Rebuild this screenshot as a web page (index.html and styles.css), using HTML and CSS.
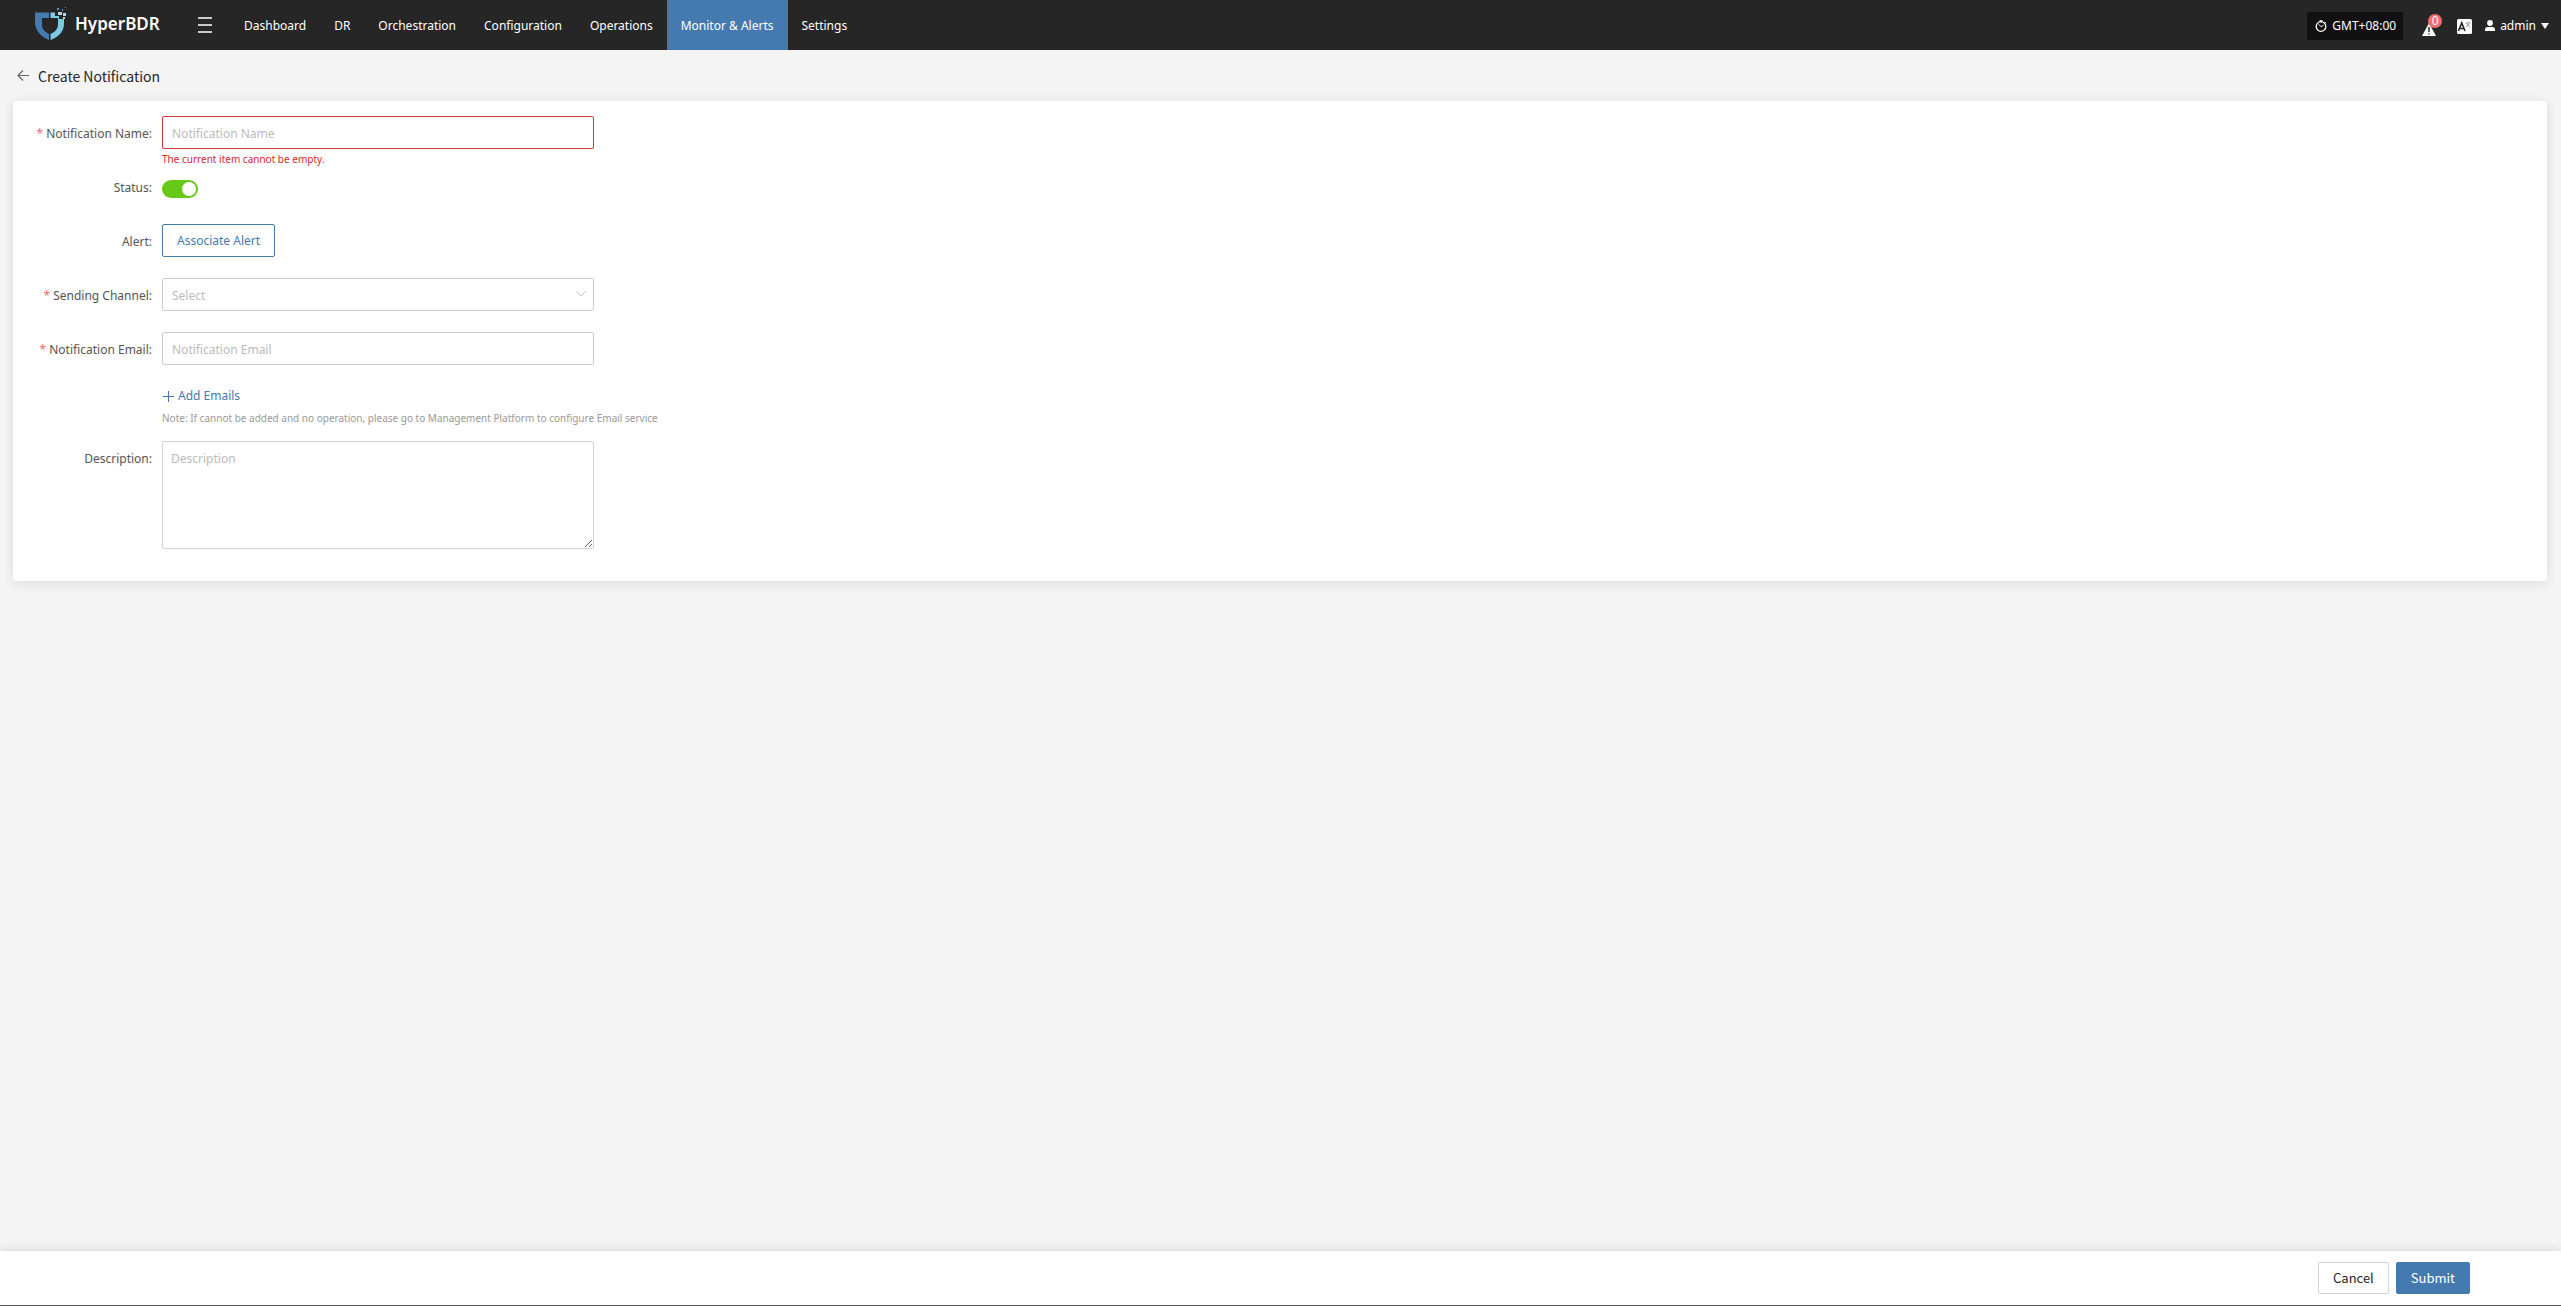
FILE: index.html
```html
<!DOCTYPE html>
<html lang="en">

<head>
	<meta charset="UTF-8">
	<meta name="viewport" content="width=device-width, initial-scale=1.0">
	<title>HyperBDR - Create Notification</title>
	<link rel="stylesheet" href="styles.css">
</head>

<body>
	<header class="topbar">
		<a class="logo" href="#">
			<svg width="32" height="34" viewBox="0 0 32 34" aria-hidden="true">
				<path fill="#457ab0" d="M0 5.5H14V11H7V18C7 22 10 25 14 27V33C5 29 0 23 0 15Z" />
				<path fill="#7dcae0" d="M15.5 5.5H20V9H24V12H29V17C29 24 24 30 15.5 33V27C20 25 23 22 23 17V11H15.5Z" />
				<path fill="#b9cfe8" d="M23 5H27V8H23ZM28 6H31V9H28ZM28 10H30V12H28Z" />
				<path fill="#5f8fc8" d="M22 1H24V3H22ZM27 2H28V4H27ZM30 0H31V1H30Z" />
			</svg>
			<span>HyperBDR</span>
		</a>
		<button class="menu-toggle" type="button" aria-label="Menu">
			<svg width="14" height="16" viewBox="0 0 14 16" aria-hidden="true">
				<path stroke="#fff" stroke-width="1.5" d="M0 1H14M0 8H14M0 15H14" />
			</svg>
		</button>
		<nav class="nav">
			<a href="#">Dashboard</a>
			<a href="#">DR</a>
			<a href="#">Orchestration</a>
			<a href="#">Configuration</a>
			<a href="#">Operations</a>
			<a class="active" href="#">Monitor &amp; Alerts</a>
			<a href="#">Settings</a>
		</nav>
		<div class="tools">
			<button class="timezone" type="button">
				<svg width="12" height="12" viewBox="0 0 12 12" fill="none" stroke="#fff" aria-hidden="true">
					<circle cx="6" cy="6.5" r="4.8" stroke-width="1.3" />
					<path d="M4.5 .7H7.5M6 1V2.5M3.8 4.3L6.2 6.8L8.5 5.2M9.8 2L11 3.2" />
				</svg>
				GMT+08:00
			</button>
			<button class="alarm" type="button" aria-label="Alerts">
				<svg width="14" height="13" viewBox="0 0 14 13" aria-hidden="true">
					<path fill="#fff" d="M7 0L14 13H0Z" />
					<path stroke="#262626" stroke-width="1.4" d="M7 4V9M7 10.2V11.6" />
				</svg>
				<span class="badge">0</span>
			</button>
			<button class="lang" type="button" aria-label="Language">
				<svg width="15" height="15" viewBox="0 0 15 15" fill="none" aria-hidden="true">
					<rect width="15" height="15" rx="1.5" fill="#fff" />
					<path stroke="#262626" stroke-width="1.6" d="M1.5 12L4.7 4L8 12M2.7 9.5H6.8" />
					<path stroke="#888" stroke-width=".8" d="M8.5 4H13.5M11 2.8V4M9.3 4.5L13.2 8M12.8 4.5L9 8" />
				</svg>
			</button>
			<button class="user" type="button">
				<svg width="10" height="12" viewBox="0 0 10 12" fill="#fff" aria-hidden="true">
					<circle cx="5" cy="3" r="2.9" />
					<path d="M0 11V9.5C0 7.7 1.5 7 3 7H7C8.5 7 10 7.7 10 9.5V11Z" />
				</svg>
				admin
				<svg width="8" height="6" viewBox="0 0 8 6" fill="#fff" aria-hidden="true">
					<path d="M0 0H8L4 6Z" />
				</svg>
			</button>
		</div>
	</header>

	<main class="page">
		<div class="page-title">
			<a href="#" aria-label="Back">
				<svg width="12" height="11" viewBox="0 0 12 11" fill="none" stroke="#666" stroke-width="1.2" aria-hidden="true">
					<path d="M6 .5L1 5.5L6 10.5M1 5.5H12" />
				</svg>
			</a>
			<h1>Create Notification</h1>
		</div>

		<form class="card" id="notification">
			<div class="row">
				<label class="required" for="name">Notification Name:</label>
				<div class="field">
					<input class="invalid" type="text" id="name" placeholder="Notification Name">
					<p class="error">The current item cannot be empty.</p>
				</div>
			</div>
			<div class="row">
				<label for="status">Status:</label>
				<div class="field">
					<input class="switch" type="checkbox" id="status" checked>
				</div>
			</div>
			<div class="row">
				<label for="alert">Alert:</label>
				<div class="field">
					<button class="btn outline" type="button" id="alert">Associate Alert</button>
				</div>
			</div>
			<div class="row">
				<label class="required" for="channel">Sending Channel:</label>
				<div class="field select">
					<select id="channel">
						<option value="">Select</option>
					</select>
					<svg width="10" height="6" viewBox="0 0 10 6" fill="none" stroke="#c0c4cc" aria-hidden="true">
						<path d="M.5 .5L5 5L9.5 .5" />
					</svg>
				</div>
			</div>
			<div class="row">
				<label class="required" for="email">Notification Email:</label>
				<div class="field">
					<input type="text" id="email" placeholder="Notification Email">
					<button class="add" type="button">
						<svg width="11" height="11" viewBox="0 0 11 11" stroke="#457ab0" aria-hidden="true">
							<path d="M5.5 0V11M0 5.5H11" />
						</svg>
						Add Emails
					</button>
					<p class="note">Note: If cannot be added and no operation, please go to Management Platform to configure Email service</p>
				</div>
			</div>
			<div class="row">
				<label for="description">Description:</label>
				<div class="field">
					<textarea id="description" placeholder="Description"></textarea>
				</div>
			</div>
		</form>
	</main>

	<footer class="actions">
		<button class="btn" type="button">Cancel</button>
		<button class="btn primary" type="submit" form="notification">Submit</button>
	</footer>
</body>

</html>
```
FILE: styles.css
```css
* {
	box-sizing: border-box;
}

body {
	display: flex;
	flex-direction: column;
	min-height: 100vh;
	margin: 0;
	background-color: #f4f4f4;
	color: #555;
	font-family: "Noto Sans", "Noto Sans CJK SC", sans-serif;
	font-size: 12px;
	line-height: 20px;
}

button,
input,
select,
textarea {
	font: inherit;
}

button {
	padding: 0;
	border: none;
	background: none;
	cursor: pointer;
}

a {
	color: inherit;
	text-decoration: none;
}

p {
	margin: 0;
}

svg {
	display: block;
	flex: none;
}

/* top bar */
.topbar {
	display: flex;
	align-items: center;
	height: 50px;
	padding: 0 12px 0 35px;
	background-color: #262626;
	color: #fff;
}

.logo {
	display: flex;
	align-items: center;
	gap: 8px;
	width: 163px;
	padding-bottom: 2px;
	font-size: 17px;
	font-weight: 600;
}

.nav {
	display: flex;
	align-self: stretch;
	margin-left: 18px;
}

.nav a {
	padding: 2px 14px 0;
	line-height: 48px;
}

.nav .active {
	background-color: #457ab0;
}

.tools {
	display: flex;
	align-items: center;
	margin-left: auto;
}

.tools button {
	display: flex;
	align-items: center;
	color: #fff;
}

.tools .timezone {
	gap: 5px;
	height: 28px;
	margin: 2px 19px 0 0;
	padding: 0 7px 0 8px;
	background-color: #111;
}

.alarm {
	position: relative;
	margin-right: 21px;
	padding-top: 8px;
}

.badge {
	position: absolute;
	top: -1px;
	left: 6px;
	width: 14px;
	height: 14px;
	border-radius: 7px;
	background-color: #f56c6c;
	line-height: 14px;
}

.lang {
	margin: 2px 13px 0 0;
}

.user {
	gap: 5px;
	padding-top: 2px;
}

/* page */
.page {
	flex: 1;
	padding: 0 14px 24px 13px;
}

.page-title {
	display: flex;
	align-items: center;
	gap: 9px;
	height: 51px;
	padding-left: 4px;
}

.page-title h1 {
	margin: 0;
	color: #262626;
	font-family: "Noto Sans CJK SC", sans-serif;
	font-size: 14px;
	font-weight: 400;
}

.card {
	padding: 15px 12px 32px;
	border-radius: 4px;
	background-color: #fff;
	box-shadow: 0 2px 12px rgba(0, 0, 0, 0.1);
}

.row {
	display: flex;
	min-height: 54px;
}

.row:last-child {
	min-height: 0;
}

.row > label {
	width: 127px;
	margin-right: 10px;
	line-height: 36px;
	text-align: right;
}

.required::before {
	content: "* ";
	color: #f56c6c;
}

.field {
	width: 432px;
}

.field input[type="text"],
.field select,
.field textarea {
	display: block;
	width: 100%;
	height: 33px;
	padding: 2px 9px 0;
	border: 1px solid #ccc;
	border-radius: 2px;
	background-color: #fff;
	color: #bbb;
}

.field textarea {
	height: 108px;
	padding: 7px 8px;
	border-color: #d4d4d4;
	resize: vertical;
}

::placeholder {
	color: #bbb;
}

.field .invalid {
	border-color: #d63638 !important;
}

.select {
	position: relative;
}

.field select {
	appearance: none;
}

.select svg {
	position: absolute;
	top: 13px;
	right: 8px;
	pointer-events: none;
}

.error,
.note {
	font-size: 10px;
	line-height: 21px;
	white-space: nowrap;
}

.error {
	color: #d9272e;
}

.note {
	margin: 2px 0 12px;
	color: #999;
}

.switch {
	display: block;
	appearance: none;
	width: 36px;
	height: 18px;
	margin: 10px 0 0;
	padding: 2px;
	border-radius: 9px;
	background-color: #67c916;
}

.switch::before {
	content: "";
	display: block;
	width: 14px;
	height: 14px;
	margin-left: auto;
	border-radius: 50%;
	background-color: #fff;
}

.add {
	display: flex;
	align-items: center;
	gap: 4px;
	margin-top: 21px;
	padding-left: 1px;
	color: #457ab0;
}

.btn {
	height: 32px;
	padding: 0 14px;
	border: 1px solid #d4d4d4;
	border-radius: 2px;
	background-color: #fff;
	color: #262626;
}

.outline {
	height: 33px;
	padding-top: 1px;
	border-color: #457ab0;
	color: #457ab0;
}

.primary {
	border-color: #457ab0;
	background-color: #457ab0;
	color: #fff;
}

/* bottom bar */
.actions {
	display: flex;
	align-items: center;
	justify-content: flex-end;
	gap: 7px;
	height: 55px;
	padding-right: 91px;
	border-bottom: 1px solid #555;
	background-color: #fff;
	box-shadow: 0 -2px 8px rgba(0, 0, 0, 0.1);
}

.actions .btn {
	font-family: "Noto Sans CJK SC", sans-serif;
	font-size: 13px;
}
```
